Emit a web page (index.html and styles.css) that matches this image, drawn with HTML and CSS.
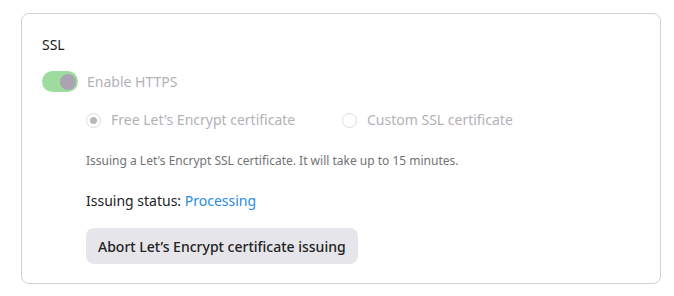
FILE: index.html
```html
<!DOCTYPE html>
<html lang="en">
<head>
    <meta charset="UTF-8">
    <meta name="viewport" content="width=device-width, initial-scale=1.0">
    <title>SSL</title>
    <link rel="stylesheet" href="styles.css">
</head>
<body>
    <div class="page">
        <div class="card">
            <h2 class="card-title">SSL</h2>

            <div class="toggle-row">
                <span class="toggle toggle-on"><span class="toggle-knob"></span></span>
                <span class="muted">Enable HTTPS</span>
            </div>

            <div class="options">
                <div class="radio-row">
                    <span class="radio radio-checked"></span>
                    <span class="muted">Free Let's Encrypt certificate</span>
                </div>
                <div class="radio-row">
                    <span class="radio"></span>
                    <span class="muted">Custom SSL certificate</span>
                </div>
            </div>

            <div class="details">
                <p class="hint">Issuing a Let's Encrypt SSL certificate. It will take up to 15 minutes.</p>
                <p class="status">Issuing status: <span class="status-value">Processing</span></p>
                <button class="btn">Abort Let’s Encrypt certificate issuing</button>
            </div>
        </div>
    </div>
</body>
</html>
```

FILE: styles.css
```css
:root {
    --border: #d3d3d6;
    --text: #222222;
    --muted: #b4b1b8;
    --hint: #737373;
    --accent: #2b8be0;
    --toggle-on: #9ddc9e;
    --knob: #aaa3b0;
    --btn-bg: #e6e5ea;
}

* {
    margin: 0;
    padding: 0;
    box-sizing: border-box;
}

body {
    background: #ffffff;
    color: var(--text);
    font-family: 'Noto Sans', 'Open Sans', sans-serif;
    font-size: 14px;
    line-height: 20px;
}

.page {
    padding: 13px 13px 12px 21px;
}

.card {
    border: 1px solid var(--border);
    border-radius: 8px;
    padding: 21px 20px 19px 20px;
}

.card-title {
    font-size: 14px;
    font-weight: 400;
    line-height: 20px;
}

.toggle-row {
    display: flex;
    align-items: center;
    gap: 9px;
    margin-top: 16px;
    height: 21px;
}

.toggle {
    display: flex;
    align-items: center;
    justify-content: flex-end;
    width: 36px;
    height: 21px;
    padding: 0 2px;
    border-radius: 11px;
    background: var(--toggle-on);
}

.toggle-knob {
    width: 16px;
    height: 16px;
    border-radius: 50%;
    background: var(--knob);
}

.muted {
    color: var(--muted);
}

.options {
    display: flex;
    gap: 0;
    margin-top: 18px;
    padding-left: 44px;
}

.radio-row {
    display: flex;
    align-items: center;
    gap: 10px;
    width: 256px;
    height: 20px;
}

.radio {
    width: 15px;
    height: 15px;
    border-radius: 50%;
    border: 1px solid #dddbe0;
    background: #ffffff;
    display: flex;
    align-items: center;
    justify-content: center;
}

.radio-checked::after {
    content: "";
    width: 7px;
    height: 7px;
    border-radius: 50%;
    background: #b9b6bd;
}

.details {
    padding-left: 44px;
}

.hint {
    margin-top: 23px;
    font-size: 12px;
    line-height: 16px;
    color: var(--hint);
}

.status {
    margin-top: 22px;
}

.status-value {
    color: var(--accent);
}

.btn {
    margin-top: 17px;
    height: 36px;
    padding: 0 12px;
    border: none;
    border-radius: 8px;
    background: var(--btn-bg);
    color: var(--text);
    font-family: inherit;
    font-size: 14px;
    font-weight: 500;
}
```
